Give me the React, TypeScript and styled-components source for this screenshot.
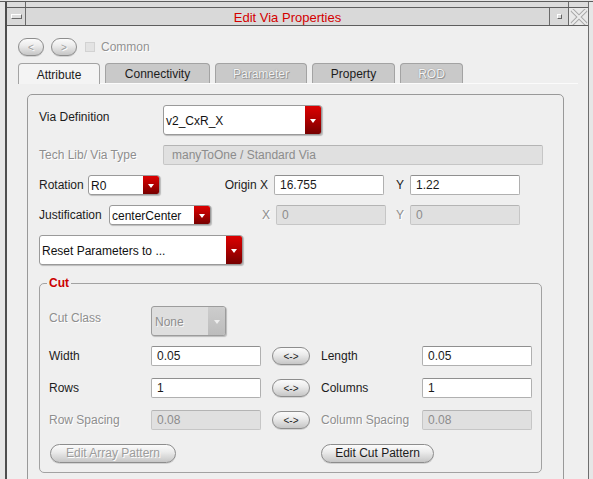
import React from "react";
import styled, { createGlobalStyle } from "styled-components";

const GlobalStyle = createGlobalStyle`
  html, body { margin: 0; padding: 0; }
  body {
    background: #efefef;
    font-family: "Liberation Sans", Arial, Helvetica, sans-serif;
    font-size: 12px;
    color: #1c1c1c;
  }
  *, *::before, *::after { box-sizing: border-box; }
`;

/* ---------- window frame ---------- */
const Screen = styled.div`
  width: 593px;
  height: 479px;
  overflow: hidden;
  background: #e6e6e6;
  padding-top: 1px;
`;

const FrameRow = styled.div`
  display: flex;
  height: 478px;
  border-top: 1px solid #5c5c5c;
`;

const SideStrip = styled.div<{ $w: number }>`
  width: ${(p) => p.$w}px;
  flex: none;
  background: #e6e6e6;
`;

const WinMain = styled.div`
  flex: 1;
  min-width: 0;
  display: flex;
  flex-direction: column;
  border-left: 2px solid #4e4e4e;
  border-right: 1px solid #6e6e6e;
`;

const TopStrip = styled.div`
  height: 5px;
  flex: none;
  display: flex;
  background: #dcdcdc;
`;

const StripCorner = styled.div<{ $w: number; $side: "l" | "r" }>`
  width: ${(p) => p.$w}px;
  flex: none;
  ${(p) => (p.$side === "l" ? "border-right" : "border-left")}: 1px solid #6a6a6a;
`;

const StripFill = styled.div`
  flex: 1;
`;

const TitleBar = styled.div`
  height: 19px;
  flex: none;
  display: flex;
  background: #d9d9d9;
  border-top: 1px solid #5e5e5e;
  border-bottom: 1px solid #5e5e5e;
`;

const TitleBox = styled.div<{ $w: number; $side: "l" | "r"; $light?: boolean }>`
  width: ${(p) => p.$w}px;
  flex: none;
  display: flex;
  align-items: center;
  justify-content: center;
  background: ${(p) => (p.$light ? "#e9e9e9" : "#d9d9d9")};
  ${(p) => (p.$side === "l" ? "border-right" : "border-left")}: 1px solid #6a6a6a;
`;

const TitleText = styled.div`
  flex: 1;
  display: flex;
  align-items: center;
  justify-content: center;
  color: #d40000;
  font-size: 13px;
  padding-top: 1px;
`;

const MenuGlyph = styled.div`
  width: 11px;
  height: 5px;
  background: #dedede;
  border-top: 1px solid #ffffff;
  border-left: 1px solid #ffffff;
  border-right: 1px solid #6a6a6a;
  border-bottom: 1px solid #6a6a6a;
`;

const MinGlyph = styled.div`
  width: 5px;
  height: 5px;
  background: #dcdcdc;
  border-top: 1px solid #ffffff;
  border-left: 1px solid #ffffff;
  border-right: 1px solid #666;
  border-bottom: 1px solid #666;
  margin-left: 1px;
`;

const Client = styled.div`
  flex: 1;
  min-height: 0;
  background: #efefef;
  display: flex;
  flex-direction: column;
  padding: 12px 0 0 11px;
`;

/* ---------- nav row ---------- */
const NavRow = styled.div`
  height: 18px;
  flex: none;
  display: flex;
  align-items: center;
`;

const Pill = styled.div<{ $w: number; $h: number; $dim?: boolean; $fs?: number; $ml?: number }>`
  width: ${(p) => p.$w}px;
  height: ${(p) => p.$h}px;
  flex: none;
  margin-left: ${(p) => p.$ml ?? 0}px;
  border-radius: ${(p) => p.$h / 2}px;
  border: 1px solid #8d8d8d;
  background: linear-gradient(#fbfbfb 0%, #ececec 40%, #c6c6c6 100%);
  box-shadow: 0 1px 0 rgba(0, 0, 0, 0.12);
  display: flex;
  align-items: center;
  justify-content: center;
  white-space: nowrap;
  font-size: ${(p) => p.$fs ?? 12}px;
  color: ${(p) => (p.$dim ? "#9c9c9c" : "#1c1c1c")};
  ${(p) => (p.$dim ? "text-shadow: 1px 1px 0 #ffffff;" : "")}
`;

const CheckBox = styled.div`
  width: 10px;
  height: 10px;
  flex: none;
  margin-left: 8px;
  background: #e3e3e3;
  border: 1px solid #d2d2d2;
`;

const DimText = styled.span`
  margin-left: 6px;
  color: #929292;
  text-shadow: 1px 1px 0 #ffffff;
`;

/* ---------- tabs ---------- */
const TabBar = styled.div`
  width: 560px;
  height: 21px;
  flex: none;
  margin-top: 7px;
  display: flex;
  align-items: flex-end;
  gap: 5px;
  border-bottom: 1px solid #fbfbfb;
`;

const Tab = styled.div<{ $w: number; $active?: boolean; $disabled?: boolean }>`
  width: ${(p) => p.$w}px;
  height: ${(p) => (p.$active ? 21 : 20)}px;
  flex: none;
  display: flex;
  align-items: center;
  justify-content: center;
  border: 1px solid #a3a3a3;
  border-bottom: none;
  border-radius: 4px 4px 0 0;
  margin-bottom: ${(p) => (p.$active ? -1 : 0)}px;
  background: ${(p) => (p.$active ? "#f4f4f4" : "#c9c9c9")};
  color: ${(p) => (p.$disabled ? "#f4f4f4" : "#1c1c1c")};
  ${(p) => (p.$disabled ? "text-shadow: 0 0 1px #7d7d7d, 1px 1px 0 #9a9a9a;" : "")}
  padding-top: 1px;
`;

/* ---------- pane ---------- */
const Pane = styled.div`
  width: 537px;
  height: 420px;
  flex: none;
  margin: 10px 0 0 9px;
  border: 1px solid #999999;
  border-radius: 5px;
  padding: 10px 0 0 11px;
  display: flex;
  flex-direction: column;
`;

const FormRow = styled.div<{ $h: number; $mt?: number }>`
  height: ${(p) => p.$h}px;
  margin-top: ${(p) => p.$mt ?? 0}px;
  flex: none;
  display: flex;
  align-items: center;
`;

const Label = styled.div<{ $w: number; $dim?: boolean; $right?: boolean; $pr?: number; $lift?: number }>`
  width: ${(p) => p.$w}px;
  flex: none;
  white-space: nowrap;
  text-align: ${(p) => (p.$right ? "right" : "left")};
  padding-right: ${(p) => p.$pr ?? 0}px;
  margin-bottom: ${(p) => (p.$lift ?? 0) * 2}px;
  color: ${(p) => (p.$dim ? "#8e8e8e" : "#1c1c1c")};
  ${(p) => (p.$dim ? "text-shadow: 1px 1px 0 #ffffff;" : "")}
`;

const Combo = styled.div<{ $w: number; $h: number; $disabled?: boolean }>`
  width: ${(p) => p.$w}px;
  height: ${(p) => p.$h}px;
  flex: none;
  display: flex;
  border: 1px solid ${(p) => (p.$disabled ? "#9c9c9c" : "#9a9a9a")};
  border-radius: 3px;
  background: ${(p) => (p.$disabled ? "#dedede" : "#ffffff")};
  box-shadow: 1px 1px 1px rgba(0, 0, 0, 0.22);
  overflow: hidden;
`;

const ComboText = styled.div<{ $disabled?: boolean }>`
  flex: 1;
  display: flex;
  align-items: center;
  padding-left: ${(p) => (p.$disabled ? 3 : 2)}px;
  padding-top: 1px;
  white-space: nowrap;
  color: ${(p) => (p.$disabled ? "#8e8e8e" : "#111111")};
  ${(p) => (p.$disabled ? "text-shadow: 1px 1px 0 #f8f8f8;" : "")}
`;

const ComboButton = styled.div<{ $disabled?: boolean }>`
  width: ${(p) => (p.$disabled ? 17 : 16)}px;
  flex: none;
  display: flex;
  align-items: center;
  justify-content: center;
  background: ${(p) =>
    p.$disabled
      ? "linear-gradient(#cdcdcd, #bcbcbc)"
      : "linear-gradient(#dc0000 0%, #b30000 45%, #760000 100%)"};
  &::after {
    content: "";
    width: 0;
    height: 0;
    border-left: 3.5px solid transparent;
    border-right: 3.5px solid transparent;
    border-top: 4px solid ${(p) => (p.$disabled ? "#eeeeee" : "#ffffff")};
    margin-top: 1px;
  }
`;

const Field = styled.div<{ $w: number; $disabled?: boolean; $pl?: number }>`
  width: ${(p) => p.$w}px;
  height: 20px;
  flex: none;
  display: flex;
  align-items: center;
  padding-left: ${(p) => p.$pl ?? 5}px;
  white-space: nowrap;
  border: 1px solid ${(p) => (p.$disabled ? "#c6c6c6" : "#b0b0b0")};
  border-top-color: ${(p) => (p.$disabled ? "#b4b4b4" : "#8f8f8f")};
  border-radius: 2px;
  background: ${(p) => (p.$disabled ? "#e0e0e0" : "#ffffff")};
  color: ${(p) => (p.$disabled ? "#8c8c8c" : "#1a1a1a")};
`;

/* ---------- group ---------- */
const Group = styled.div`
  position: relative;
  width: 503px;
  height: 190px;
  flex: none;
  margin-top: 18px;
  border: 1px solid #a2a2a2;
  border-radius: 5px;
  padding: 22px 0 0 9px;
  display: flex;
  flex-direction: column;
`;

const Legend = styled.div`
  position: absolute;
  top: -8px;
  left: 7px;
  padding: 0 2px 0 2px;
  background: #efefef;
  color: #cc0000;
  font-weight: bold;
  line-height: 14px;
`;

const Gap = styled.div<{ $w: number }>`
  width: ${(p) => p.$w}px;
  flex: none;
`;

function CloseGlyph() {
  return (
    <svg width="18" height="16" viewBox="0 0 18 16">
      <path d="M2 1 L16 15 M16 1 L2 15" stroke="#a8a8a8" strokeWidth="4" fill="none" />
      <path d="M2 1 L16 15 M16 1 L2 15" stroke="#ececec" strokeWidth="2" fill="none" />
    </svg>
  );
}

function ComboBox(props: { w: number; h: number; text: string; disabled?: boolean }) {
  return (
    <Combo $w={props.w} $h={props.h} $disabled={props.disabled}>
      <ComboText $disabled={props.disabled}>{props.text}</ComboText>
      <ComboButton $disabled={props.disabled} />
    </Combo>
  );
}

export default function App() {
  return (
    <>
      <GlobalStyle />
      <Screen>
        <FrameRow>
          <SideStrip $w={5} />
          <WinMain>
            <TopStrip>
              <StripCorner $w={19} $side="l" />
              <StripFill />
              <StripCorner $w={20} $side="r" />
            </TopStrip>
            <TitleBar>
              <TitleBox $w={19} $side="l">
                <MenuGlyph />
              </TitleBox>
              <TitleText>Edit Via Properties</TitleText>
              <TitleBox $w={19} $side="r">
                <MinGlyph />
              </TitleBox>
              <TitleBox $w={20} $side="r" $light>
                <CloseGlyph />
              </TitleBox>
            </TitleBar>
            <Client>
              <NavRow>
                <Pill $w={26} $h={18} $fs={10} $dim>
                  &lt;
                </Pill>
                <Pill $w={26} $h={18} $fs={10} $dim $ml={7}>
                  &gt;
                </Pill>
                <CheckBox />
                <DimText>Common</DimText>
              </NavRow>

              <TabBar>
                <Tab $w={82} $active>
                  Attribute
                </Tab>
                <Tab $w={105}>Connectivity</Tab>
                <Tab $w={92} $disabled>
                  Parameter
                </Tab>
                <Tab $w={83}>Property</Tab>
                <Tab $w={63} $disabled>
                  ROD
                </Tab>
              </TabBar>

              <Pane>
                <FormRow $h={30}>
                  <Label $w={124} $lift={3}>
                    Via Definition
                  </Label>
                  <ComboBox w={159} h={30} text="v2_CxR_X" />
                </FormRow>

                <FormRow $h={20} $mt={10}>
                  <Label $w={124} $dim>
                    Tech Lib/ Via Type
                  </Label>
                  <Field $w={380} $disabled $pl={8}>
                    manyToOne / Standard Via
                  </Field>
                </FormRow>

                <FormRow $h={20} $mt={10}>
                  <Label $w={49}>Rotation</Label>
                  <ComboBox w={72} h={20} text="R0" />
                  <Label $w={114} $right $pr={6}>
                    Origin X
                  </Label>
                  <Field $w={110}>16.755</Field>
                  <Label $w={26} $right $pr={6}>
                    Y
                  </Label>
                  <Field $w={110}>1.22</Field>
                </FormRow>

                <FormRow $h={20} $mt={10}>
                  <Label $w={70}>Justification</Label>
                  <ComboBox w={102} h={20} text="centerCenter" />
                  <Label $w={65} $right $pr={6} $dim>
                    X
                  </Label>
                  <Field $w={110} $disabled>
                    0
                  </Field>
                  <Label $w={24} $right $pr={6} $dim>
                    Y
                  </Label>
                  <Field $w={110} $disabled>
                    0
                  </Field>
                </FormRow>

                <FormRow $h={30} $mt={10}>
                  <ComboBox w={204} h={30} text="Reset Parameters to ..." />
                </FormRow>

                <Group>
                  <Legend>Cut</Legend>
                  <FormRow $h={30}>
                    <Label $w={102} $dim $lift={3}>
                      Cut Class
                    </Label>
                    <ComboBox w={75} h={30} text="None" disabled />
                  </FormRow>

                  <FormRow $h={20} $mt={10}>
                    <Label $w={102}>Width</Label>
                    <Field $w={110}>0.05</Field>
                    <Gap $w={11} />
                    <Pill $w={38} $h={18} $fs={10}>
                      &lt;-&gt;
                    </Pill>
                    <Gap $w={11} />
                    <Label $w={101}>Length</Label>
                    <Field $w={110}>0.05</Field>
                  </FormRow>

                  <FormRow $h={20} $mt={12}>
                    <Label $w={102}>Rows</Label>
                    <Field $w={110}>1</Field>
                    <Gap $w={11} />
                    <Pill $w={38} $h={18} $fs={10}>
                      &lt;-&gt;
                    </Pill>
                    <Gap $w={11} />
                    <Label $w={101}>Columns</Label>
                    <Field $w={110}>1</Field>
                  </FormRow>

                  <FormRow $h={20} $mt={12}>
                    <Label $w={102} $dim>
                      Row Spacing
                    </Label>
                    <Field $w={110} $disabled>
                      0.08
                    </Field>
                    <Gap $w={11} />
                    <Pill $w={38} $h={18} $fs={10}>
                      &lt;-&gt;
                    </Pill>
                    <Gap $w={11} />
                    <Label $w={101} $dim>
                      Column Spacing
                    </Label>
                    <Field $w={110} $disabled>
                      0.08
                    </Field>
                  </FormRow>

                  <FormRow $h={20} $mt={13}>
                    <Gap $w={1} />
                    <Pill $w={126} $h={19} $dim>
                      Edit Array Pattern
                    </Pill>
                    <Gap $w={145} />
                    <Pill $w={113} $h={19}>
                      Edit Cut Pattern
                    </Pill>
                  </FormRow>
                </Group>
              </Pane>
            </Client>
          </WinMain>
          <SideStrip $w={4} />
        </FrameRow>
      </Screen>
    </>
  );
}
